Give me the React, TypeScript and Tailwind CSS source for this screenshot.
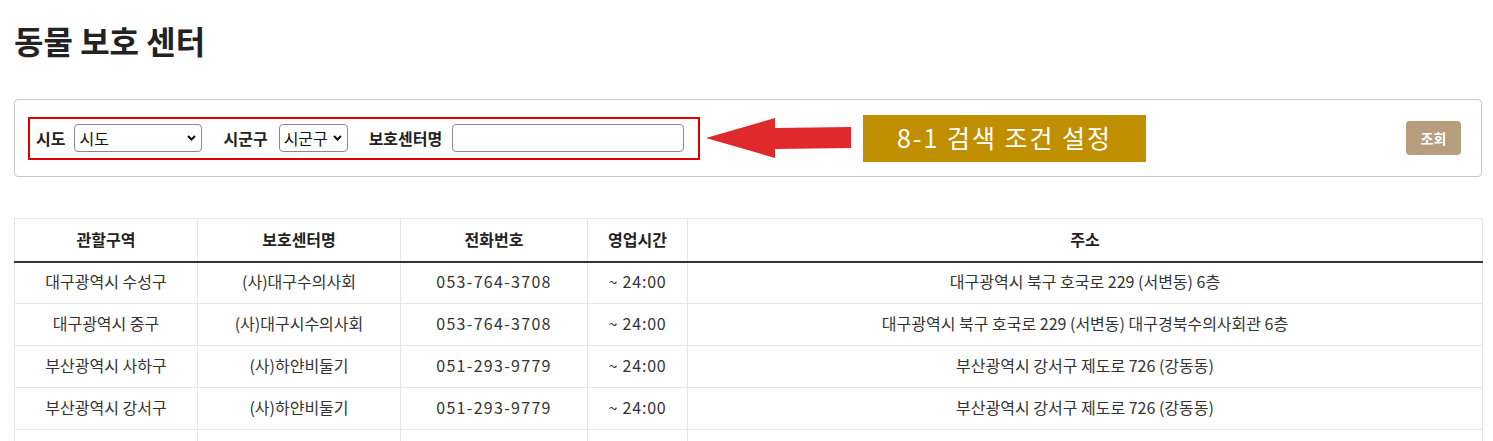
const font = { fontFamily: '"Noto Sans CJK KR", "Noto Sans", sans-serif' };

const rows = [
  ['대구광역시 수성구', '(사)대구수의사회', '053-764-3708', '~ 24:00', '대구광역시 북구 호국로 229 (서변동) 6층'],
  ['대구광역시 중구', '(사)대구시수의사회', '053-764-3708', '~ 24:00', '대구광역시 북구 호국로 229 (서변동) 대구경북수의사회관 6층'],
  ['부산광역시 사하구', '(사)하얀비둘기', '051-293-9779', '~ 24:00', '부산광역시 강서구 제도로 726 (강동동)'],
  ['부산광역시 강서구', '(사)하얀비둘기', '051-293-9779', '~ 24:00', '부산광역시 강서구 제도로 726 (강동동)'],
  ['', '', '', '', ''],
];

function Chevron() {
  return (
    <svg className="absolute right-[6px] top-1/2 -translate-y-1/2 pointer-events-none" width="9" height="6" viewBox="0 0 9 6">
      <polyline points="1,1 4.5,4.5 8,1" fill="none" stroke="#111" strokeWidth="2" />
    </svg>
  );
}

function Select({ label, width }: { label: string; width: string }) {
  return (
    <div className={`relative h-[28px] ${width}`}>
      <select className="appearance-none w-full h-full border border-[#8a8a8a] rounded-[4px] pl-[4px] text-[16px] font-normal text-[#111] bg-white">
        <option>{label}</option>
      </select>
      <Chevron />
    </div>
  );
}

export default function App() {
  return (
    <div className="min-h-screen bg-white pl-[14px] pt-[18px] text-[#333]" style={font}>
      <h1 className="text-[32px] font-bold leading-[44px] text-[#222]">동물 보호 센터</h1>

      <div className="mt-[37px] w-[1468px] h-[78px] border border-[#c8c8c8] rounded-[4px] flex items-center pl-[13px] pr-[20px]">
        <div className="w-[672px] h-[43px] border-2 border-[#e00000] flex items-center pl-[6px] text-[16px] font-bold text-[#222]">
          <span className="mr-[9px]">시도</span>
          <Select label="시도" width="w-[128px]" />
          <span className="ml-[21px] mr-[11px]">시군구</span>
          <Select label="시군구" width="w-[69px]" />
          <span className="ml-[21px] mr-[10px]">보호센터명</span>
          <input className="w-[232px] h-[28px] border border-[#8a8a8a] rounded-[4px] bg-white" />
        </div>

        <svg className="ml-[6px]" width="146" height="42" viewBox="0 0 146 42">
          <polygon points="0,21 69,1 69,11 145,10 145,31 69,32 69,41" fill="#e0292b" />
        </svg>

        <div className="ml-[11px] w-[283px] h-[47px] bg-[#c08f00] flex items-center justify-center text-white text-[25px] tracking-[2px]">
          8-1 검색 조건 설정
        </div>

        <button className="ml-auto w-[55px] h-[34px] bg-[#b59d7d] rounded-[4px] text-white font-bold text-[14px]">
          조회
        </button>
      </div>

      <table className="mt-[41px] w-[1468px] border border-[#e6e6e6] table-fixed text-[16px]">
        <colgroup>
          <col className="w-[183px]" />
          <col className="w-[203px]" />
          <col className="w-[187px]" />
          <col className="w-[100px]" />
          <col className="w-[795px]" />
        </colgroup>
        <thead>
          <tr>
            {['관할구역', '보호센터명', '전화번호', '영업시간', '주소'].map((h) => (
              <th key={h} className="h-[43px] pb-[1px] border-r border-[#e6e6e6] border-b-2 border-b-[#333] font-bold text-[#222]">
                {h}
              </th>
            ))}
          </tr>
        </thead>
        <tbody>
          {rows.map((r, i) => (
            <tr key={i}>
              {r.map((c, j) => (
                <td
                  key={j}
                  className={`h-[42px] pb-[3px] text-center border-r border-b border-[#e6e6e6] ${j === 2 ? 'tracking-[1.3px]' : j === 3 ? 'tracking-[0.8px]' : ''}`}
                >
                  {c}
                </td>
              ))}
            </tr>
          ))}
        </tbody>
      </table>
    </div>
  );
}
